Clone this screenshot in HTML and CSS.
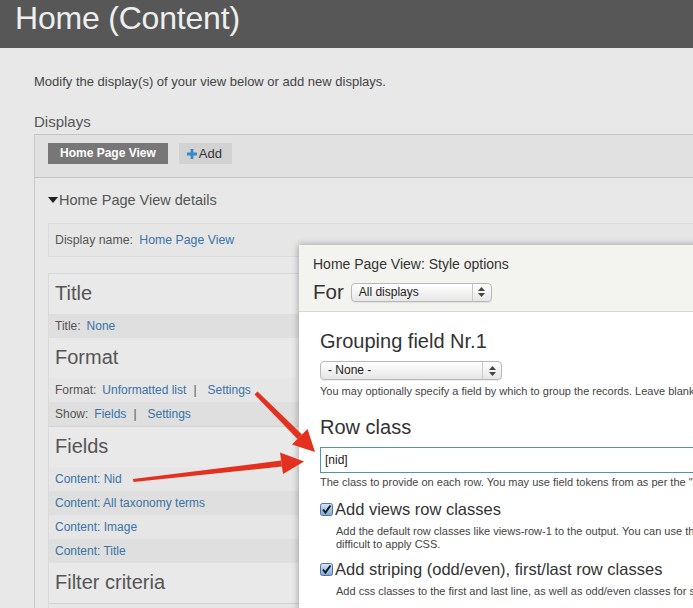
FILE: index.html
```
<!DOCTYPE html>
<html>
<head>
<meta charset="utf-8">
<link rel="stylesheet" href="styles.css">
</head>
<body>
<header class="top"><h1>Home (Content)</h1></header>
<main class="page">
  <p class="intro">Modify the display(s) of your view below or add new displays.</p>
  <h2 class="displays-label">Displays</h2>
  <section class="displays">
    <div class="tabs">
      <span class="tab tab-active">Home Page View</span>
      <span class="tab tab-add"><svg class="plus" width="10" height="10" viewBox="0 0 10 10"><path d="M3.6 0h2.8v3.6H10v2.8H6.4V10H3.6V6.4H0V3.6h3.6z" fill="#3a87c8"/></svg>Add</span>
    </div>
    <div class="details">
      <div class="details-title"><span class="tri"></span>Home Page View details</div>
      <div class="display-name">Display name: <a class="lnk">Home Page View</a></div>
      <div class="column">
        <div class="sec-head">Title</div>
        <div class="row dark"><span class="lbl">Title:</span><a class="lnk">None</a></div>
        <div class="sec-head">Format</div>
        <div class="row"><span class="lbl">Format:</span><a class="lnk">Unformatted list</a><span class="sep">|</span><a class="lnk">Settings</a></div>
        <div class="row dark"><span class="lbl">Show:</span><a class="lnk">Fields</a><span class="sep">|</span><a class="lnk">Settings</a></div>
        <div class="sec-head bordered">Fields</div>
        <div class="row"><a class="lnk">Content: Nid</a></div>
        <div class="row dark"><a class="lnk">Content: All taxonomy terms</a></div>
        <div class="row"><a class="lnk">Content: Image</a></div>
        <div class="row dark"><a class="lnk">Content: Title</a></div>
        <div class="sec-head">Filter criteria</div>
        <div class="row bordered"></div>
      </div>
    </div>
  </section>
</main>

<div class="modal">
  <div class="modal-head">
    <div class="modal-title">Home Page View: Style options</div>
    <div class="for-row">
      <span class="for">For</span>
      <div class="select sel-for"><span class="sel-label">All displays</span><span class="sel-btn"><svg width="7" height="10" viewBox="0 0 7 10"><path d="M3.5 0L7 4H0z M3.5 10L0 6h7z" fill="#444"/></svg></span></div>
    </div>
  </div>
  <div class="modal-body">
    <h3 class="fhead">Grouping field Nr.1</h3>
    <div class="select sel-none"><span class="sel-label">- None -</span><span class="sel-btn"><svg width="7" height="10" viewBox="0 0 7 10"><path d="M3.5 0L7 4H0z M3.5 10L0 6h7z" fill="#444"/></svg></span></div>
    <p class="help help-group">You may optionally specify a field by which to group the records. Leave blank to not group.</p>
    <h3 class="fhead fhead-row">Row class</h3>
    <div class="input">[nid]</div>
    <p class="help help-row">The class to provide on each row. You may use field tokens from as per the "Replacement patterns" used in "Rewrite the output of this field" for all fields.</p>
    <div class="check check-1"><svg class="cb" width="13" height="13" viewBox="0 0 13 13"><defs><linearGradient id="cbg" x1="0" y1="0" x2="0" y2="1"><stop offset="0" stop-color="#d3e6fa"/><stop offset="1" stop-color="#79ace0"/></linearGradient></defs><rect x="0.5" y="0.5" width="12" height="12" rx="2" fill="url(#cbg)" stroke="#55739a"/><path d="M3 6.5l2.4 3L10.5 2.5" fill="none" stroke="#1a1a1a" stroke-width="2"/></svg>Add views row classes</div>
    <p class="desc desc-1">Add the default row classes like views-row-1 to the output. You can use this to quickly reduce the amount of markup the view provides by default, at the cost of making it more<br>difficult to apply CSS.</p>
    <div class="check check-2"><svg class="cb" width="13" height="13" viewBox="0 0 13 13"><rect x="0.5" y="0.5" width="12" height="12" rx="2" fill="url(#cbg)" stroke="#55739a"/><path d="M3 6.5l2.4 3L10.5 2.5" fill="none" stroke="#1a1a1a" stroke-width="2"/></svg>Add striping (odd/even), first/last row classes</div>
    <p class="desc desc-2">Add css classes to the first and last line, as well as odd/even classes for striping.</p>
  </div>
</div>

<svg class="arrows" width="693" height="608" viewBox="0 0 693 608">
  <g fill="#e3301f" stroke="none">
    <path d="M254.5 394.5 L257.5 391.5 L302 434.5 L297.5 439 Z"/>
    <path d="M292 444.5 L307.5 429 L315 452 Z"/>
    <path d="M133 479 L281 460.5 L282 466.5 L133.5 482 Z"/>
    <path d="M283 474 L280 452.5 L304 461.5 Z"/>
  </g>
</svg>
</body>
</html>
```
FILE: styles.css
```
html, body {
  margin: 0;
  padding: 0;
}
body {
  width: 693px;
  height: 608px;
  overflow: hidden;
  position: relative;
  background: #e8e8e8;
  font-family: "Liberation Sans", Arial, sans-serif;
  color: #555;
}
.top {
  height: 48px;
  background: #575757;
  padding: 0 15px;
}
.top h1 {
  margin: 0;
  font-size: 32px;
  font-weight: normal;
  line-height: 36px;
  color: #eeeeee;
  letter-spacing: -0.2px;
}
.page {
  padding-left: 34px;
}
.intro {
  margin: 26px 0 0;
  font-size: 13px;
  line-height: 16px;
  color: #444;
}
.displays-label {
  margin: 23px 0 0;
  font-size: 15px;
  font-weight: normal;
  line-height: 18px;
  color: #555;
}
.displays {
  margin-top: 3px;
  border-top: 1px solid #c4c4c4;
  border-left: 1px solid #c8c8c8;
  height: 480px;
}
.tabs {
  background: #e1e1e1;
  border-bottom: 1px solid #c4c4c4;
  padding: 8px 13px 13px;
  display: flex;
  gap: 11px;
}
.tab {
  height: 21px;
  line-height: 21px;
  font-size: 12px;
  padding: 0 12px;
}
.tab-active {
  background: #777;
  color: #fff;
  font-weight: bold;
}
.tab-add {
  background: #d2d2d2;
  color: #333;
  font-size: 13px;
  padding: 0 10px 0 8px;
  display: flex;
  align-items: center;
}
.plus {
  margin-right: 2px;
}
.details {
  padding-left: 13px;
}
.details-title {
  margin-top: 13px;
  font-size: 14.5px;
  line-height: 18px;
  color: #555;
  display: flex;
  align-items: center;
}
.tri {
  width: 0;
  height: 0;
  border-left: 5px solid transparent;
  border-right: 5px solid transparent;
  border-top: 6px solid #222;
  margin-right: 1px;
}
.display-name {
  margin-top: 14px;
  height: 32px;
  line-height: 32px;
  border: 1px solid #dcdcdc;
  border-right: none;
  background: #e6e6e6;
  padding-left: 6px;
  font-size: 12.3px;
  color: #555;
}
.display-name .lnk {
  margin-left: 3px;
}
.lnk {
  color: #3a73a6;
  text-decoration: none;
}
.column {
  margin-top: 16px;
  width: 320px;
  border-top: 1px solid #d8d8d8;
  border-left: 1px solid #dadada;
  background: #e9e9e9;
}
.sec-head {
  height: 40px;
  line-height: 39px;
  padding-left: 6px;
  font-size: 20px;
  color: #555;
}
.row {
  height: 24px;
  line-height: 24px;
  padding-left: 6px;
  font-size: 12px;
  background: #e6e6e6;
  color: #555;
}
.row.dark {
  background: #dfdfdf;
}
.lbl {
  margin-right: 6px;
}
.sep {
  margin: 0 11px 0 7px;
  color: #555;
}
.bordered {
  border-top: 1px solid #d2d2d2;
}

/* modal */
.modal {
  position: absolute;
  left: 299px;
  top: 245px;
  width: 620px;
  height: 400px;
  background: #fff;
  box-shadow: 0 0 7px rgba(0,0,0,0.35);
}
.modal-head {
  height: 56px;
  padding: 10px 14px 0;
  background: #f3f3ef;
  border-bottom: 1px solid #d7d7d3;
}
.modal-title {
  font-size: 14px;
  line-height: 18px;
  color: #333;
}
.for-row {
  margin-top: 8px;
  display: flex;
  align-items: center;
  height: 22px;
}
.for {
  font-size: 20.5px;
  color: #333;
  margin-right: 7px;
}
.select {
  display: flex;
  align-items: stretch;
  height: 17px;
  border: 1px solid #b9b9b9;
  border-radius: 4px;
  background: linear-gradient(#ffffff, #e6e6e6);
  font-size: 12px;
  color: #222;
  box-shadow: 0 1px 1px rgba(0,0,0,0.08);
}
.sel-label {
  flex: 1;
  line-height: 17px;
  padding-left: 7px;
}
.sel-btn {
  width: 18px;
  border-left: 1px solid #c9c9c9;
  display: flex;
  align-items: center;
  justify-content: center;
}
.sel-for {
  width: 139px;
}
.modal-body {
  padding: 17px 0 0 21px;
  white-space: nowrap;
}
.fhead {
  margin: 0;
  font-size: 20px;
  font-weight: normal;
  line-height: 24px;
  color: #333;
}
.sel-none {
  margin-top: 8px;
  width: 180px;
}
.help {
  margin: 5px 0 0;
  font-size: 11px;
  line-height: 13px;
  color: #444;
}
.fhead-row {
  margin-top: 17px;
}
.input {
  margin-top: 8px;
  height: 24px;
  line-height: 24px;
  border: 1px solid #4f97a6;
  padding-left: 4px;
  font-size: 12px;
  color: #222;
}
.help-row {
  margin-top: 3px;
}
.check {
  display: flex;
  align-items: center;
  font-size: 16.5px;
  line-height: 20px;
  color: #333;
}
.check-1 {
  margin-top: 10px;
}
.check-2 {
  margin-top: 8px;
}
.cb {
  margin-right: 2px;
}
.desc {
  margin: 6px 0 0 16px;
  font-size: 11px;
  line-height: 13px;
  color: #444;
}
.arrows {
  position: absolute;
  left: 0;
  top: 0;
  pointer-events: none;
}
```
